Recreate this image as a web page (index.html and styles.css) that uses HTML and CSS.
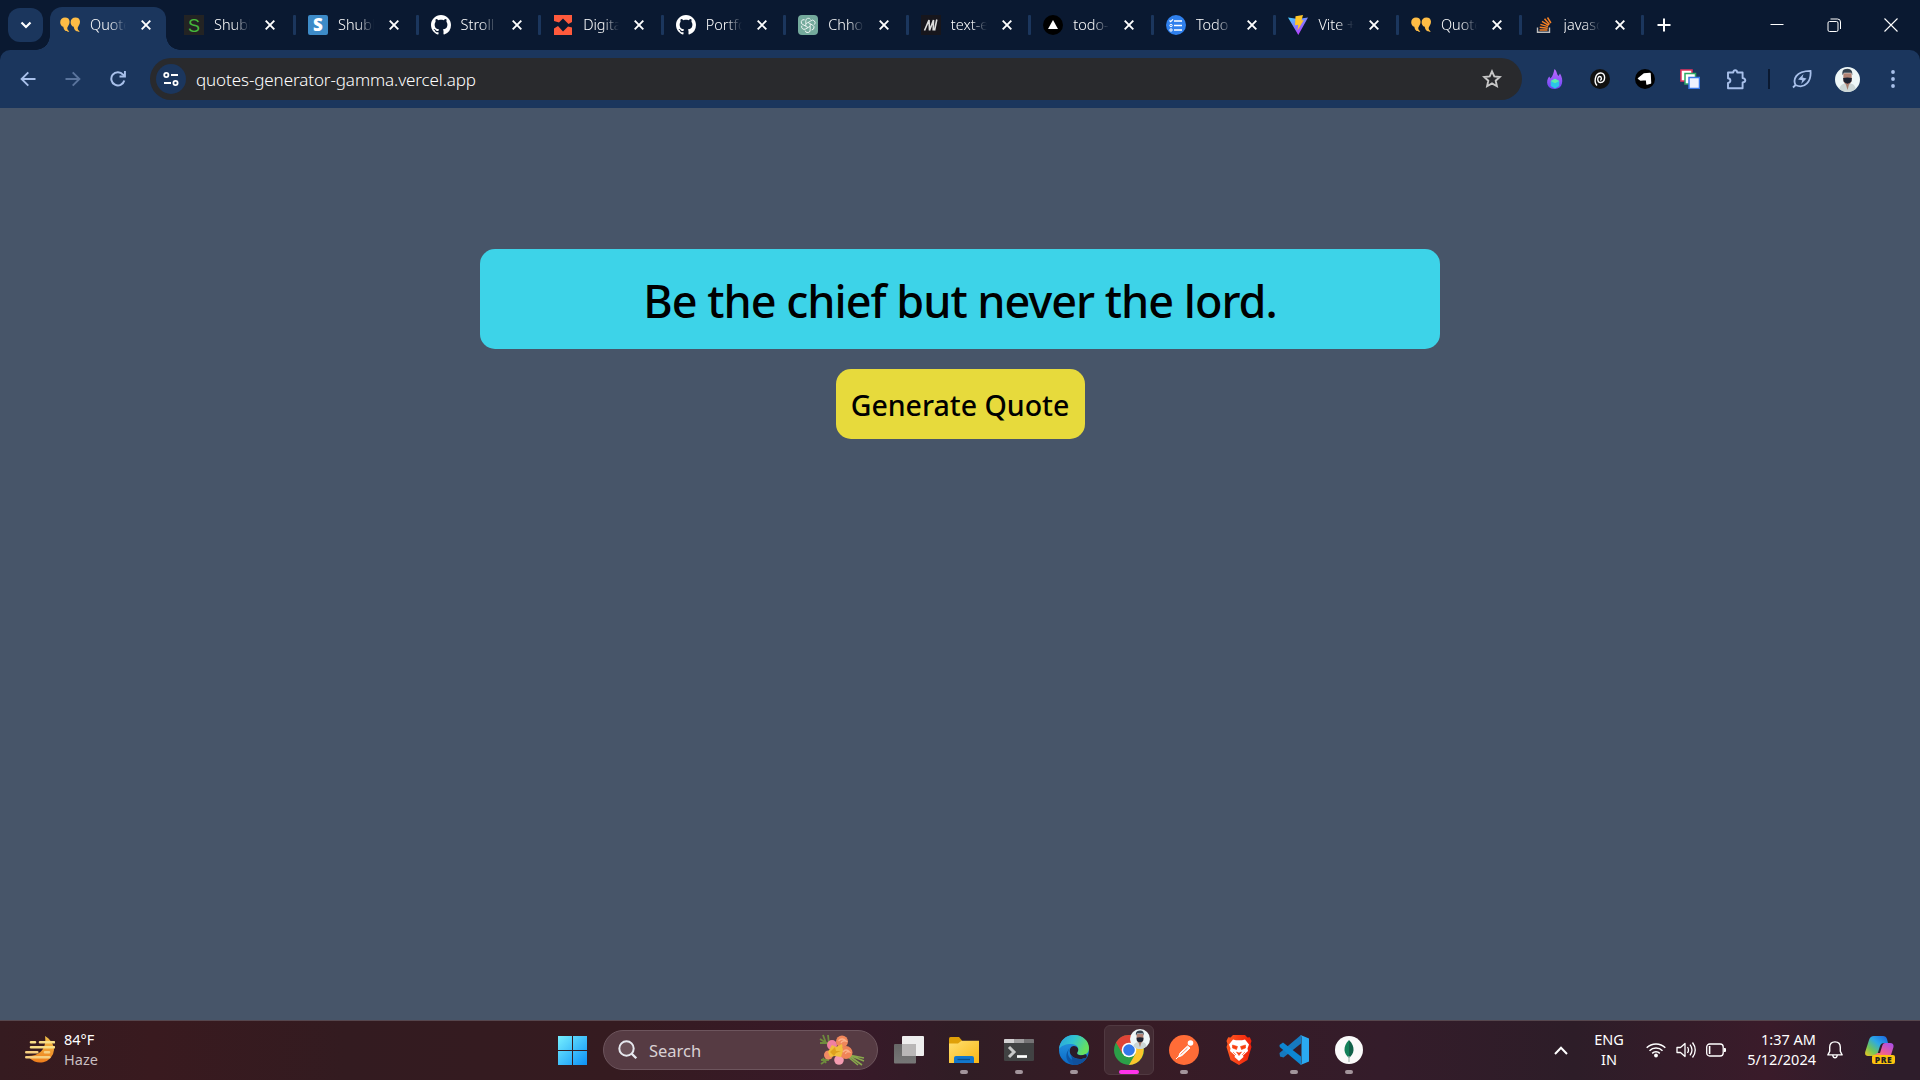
FILE: index.html
```html
<!DOCTYPE html>
<html lang="en">
<head>
<meta charset="utf-8">
<title>Quotes Generator</title>
<link rel="stylesheet" href="styles.css">
</head>
<body>
<svg class="defs" aria-hidden="true">
  <defs>
    <linearGradient id="gWin" x1="0" y1="0" x2="1" y2="1"><stop offset="0" stop-color="#76f0ff"/><stop offset="1" stop-color="#0c90f5"/></linearGradient>
    <linearGradient id="gSun" x1="0" y1="0" x2="0" y2="1"><stop offset="0" stop-color="#f0c04a"/><stop offset="1" stop-color="#ee7d1c"/></linearGradient>
    <linearGradient id="gFolder" x1="0" y1="0" x2="1" y2="1"><stop offset="0" stop-color="#ffdf70"/><stop offset="1" stop-color="#f9b714"/></linearGradient>
    <linearGradient id="gEdge1" x1="0" y1="0" x2="1" y2=".4"><stop offset="0" stop-color="#2b9fe0"/><stop offset=".5" stop-color="#30c4d0"/><stop offset="1" stop-color="#66e060"/></linearGradient>
    <linearGradient id="gEdge2" x1="0" y1="0" x2="0" y2="1"><stop offset="0" stop-color="#2a9de6"/><stop offset="1" stop-color="#0a68c4"/></linearGradient>
    <linearGradient id="gVite" x1="0" y1="0" x2=".6" y2="1"><stop offset="0" stop-color="#41d1ff"/><stop offset="1" stop-color="#bd34fe"/></linearGradient>
    <linearGradient id="gFlame" x1="0" y1="0" x2="0" y2="1"><stop offset="0" stop-color="#c06bff"/><stop offset="1" stop-color="#6a45f5"/></linearGradient>
    <linearGradient id="gCop1" x1="1" y1="0" x2="0" y2="1"><stop offset="0" stop-color="#1b62e0"/><stop offset=".4" stop-color="#2ba8e8"/><stop offset=".7" stop-color="#6fc45a"/><stop offset="1" stop-color="#f2c81e"/></linearGradient>
    <linearGradient id="gCop2" x1="1" y1="0" x2="0" y2="1"><stop offset="0" stop-color="#a24df0"/><stop offset=".6" stop-color="#ea5c9c"/><stop offset="1" stop-color="#ff8a4a"/></linearGradient>
    <linearGradient id="gBrave" x1="0" y1="0" x2="1" y2="0"><stop offset="0" stop-color="#ff5a22"/><stop offset="1" stop-color="#f0200a"/></linearGradient>
    <linearGradient id="gTv" x1="0" y1="0" x2="0" y2="1"><stop offset="0" stop-color="#666"/><stop offset="1" stop-color="#777"/></linearGradient>
    <symbol id="quote" viewBox="0 0 20 20"><path fill="#ffbd45" d="M5 2.400a4.600 4.600 0 0 1 4.600 4.400c0 3-2 4.600-2.300 6-.2 1.400.5 2.600 2 3.600-.9.700-5.200.6-6-4.600C1.200 11.200.2 9.200.2 7.200A4.800 4.800 0 0 1 5 2.400zM15.400 2.400A4.600 4.600 0 0 1 20 6.800c0 3-2 4.600-2.300 6-.2 1.400.5 2.600 2 3.600-.9.700-5.200.6-6-4.600-2.100-.6-3.100-2.600-3.100-4.600a4.800 4.800 0 0 1 4.800-4.800z"/></symbol>
    <symbol id="github" viewBox="0 0 16 16"><path fill="#fff" d="M8 0C3.580 0 0 3.580 0 8c0 3.540 2.290 6.530 5.470 7.590.4.070.55-.17.55-.38 0-.19-.01-.82-.01-1.490-2.010.37-2.530-.49-2.690-.94-.09-.23-.48-.94-.82-1.130-.28-.15-.68-.52-.01-.53.63-.01 1.080.58 1.230.82.72 1.210 1.870.87 2.330.66.07-.52.28-.87.51-1.070-1.780-.2-3.640-.89-3.640-3.950 0-.87.31-1.590.82-2.150-.08-.2-.36-1.020.08-2.120 0 0 .67-.21 2.200.82.64-.18 1.320-.27 2-.27s1.360.09 2 .27c1.530-1.040 2.200-.82 2.200-.82.44 1.100.16 1.920.08 2.120.51.56.82 1.270.82 2.150 0 3.070-1.870 3.750-3.650 3.950.29.25.54.73.54 1.480 0 1.070-.01 1.930-.01 2.200 0 .21.15.46.55.38A8.010 8.010 0 0 0 16 8c0-4.420-3.580-8-8-8z"/></symbol>
    <symbol id="x" viewBox="0 0 12 12"><path d="M1.700 1.700l8.600 8.600M10.300 1.700l-8.600 8.600" stroke="#fff" stroke-width="1.900"/></symbol>
    <symbol id="face" viewBox="0 0 24 24"><circle cx="12" cy="12" r="12" fill="#eef7f8"/><path d="M4 21c1-4 4-5 5-5h6c2 0 4 1 5 5a12 12 0 0 1-16 0z" fill="#cbd6d6"/><path d="M10 15h4l-2 7z" fill="#a87e6c"/><path d="M8 6h8v7q-1 4-4 4t-4-4z" fill="#b08172"/><path d="M7.200 8q-1-5.500 3-6 7-1.500 6.500 6l-1-2.500H8.500z" fill="#33414e"/><path d="M7.800 10.500q4-1 8.400 0l-.4 3.500q-3.800 4-7.500 0z" fill="#1b2333"/></symbol>
  </defs>
</svg>

<div class="browser">
  <header class="tabstrip">
    <div class="tab-search"><svg width="12" height="8" viewBox="0 0 12 8"><path d="M1.500 1.500L6 6l4.500-4.500" fill="none" stroke="#fff" stroke-width="2.200"/></svg></div>
    <div class="tab active"><svg class="fav"><use href="#quote"/></svg><span class="title">Quotes</span><svg class="close"><use href="#x"/></svg></div>
    <div class="tabs">
      <div class="tab"><svg class="fav" viewBox="0 0 20 20"><rect width="20" height="20" fill="#232323"/><text x="10" y="16.500" text-anchor="middle" class="fav-s" fill="#45b83c">S</text></svg><span class="title">Shubham</span><svg class="close"><use href="#x"/></svg></div>
      <div class="tab"><svg class="fav" viewBox="0 0 20 20"><rect width="20" height="20" rx="2" fill="#3d8bc8"/><text x="10" y="16" text-anchor="middle" class="fav-s bold" fill="#fff">S</text></svg><span class="title">Shubham</span><svg class="close"><use href="#x"/></svg></div>
      <div class="tab"><svg class="fav"><use href="#github"/></svg><span class="title">Stroll</span><svg class="close"><use href="#x"/></svg></div>
      <div class="tab"><svg class="fav" viewBox="0 0 20 20"><path fill="#ff5a3c" d="M1 0h18v7l-3.500 2L10 3.500 6 7.500 1 6zM1 20h18v-7.500l-4-1-5 5L5 11l-4 2.500z"/></svg><span class="title">Digital</span><svg class="close"><use href="#x"/></svg></div>
      <div class="tab"><svg class="fav"><use href="#github"/></svg><span class="title">Portfolio</span><svg class="close"><use href="#x"/></svg></div>
      <div class="tab"><svg class="fav" viewBox="0 0 20 20"><rect width="20" height="20" rx="4" fill="#74aa9c"/><g fill="none" stroke="#fff" stroke-width=".9" transform="translate(1.200 1.200) scale(.88)"><path id="petal" d="M10 7.200l3.200-1.900a2.900 2.900 0 0 1 3.900 4.300M7.500 8.600V5.200a2.900 2.900 0 0 1 5.300-1.600"/><use href="#petal" transform="rotate(120 10 10)"/><use href="#petal" transform="rotate(240 10 10)"/><path d="M10 7.100l2.500 1.500v2.800L10 12.900l-2.500-1.500V8.600z"/></g></svg><span class="title">Chhota</span><svg class="close"><use href="#x"/></svg></div>
      <div class="tab"><svg class="fav" viewBox="0 0 20 20"><rect width="20" height="20" fill="#17161c"/><path d="M3.500 15.500L8 5l.5 10.500M8.500 15.500L12.500 5l-.3 10.500M15.800 4.500L13.500 15.500" fill="none" stroke="#ddd" stroke-width="1.600"/></svg><span class="title">text-edit</span><svg class="close"><use href="#x"/></svg></div>
      <div class="tab"><svg class="fav" viewBox="0 0 20 20"><circle cx="10" cy="10" r="10" fill="#000"/><path d="M10 5l5 9H5z" fill="#fff"/></svg><span class="title">todo-list</span><svg class="close"><use href="#x"/></svg></div>
      <div class="tab"><svg class="fav" viewBox="0 0 20 20"><circle cx="10" cy="10" r="10" fill="#2f80ed"/><path d="M8 6h8M8 10.500h8M8 15h8" stroke="#fff" stroke-width="1.700"/><path d="M3.500 5.500l1.200 1.200L7 4.400" fill="none" stroke="#fff" stroke-width="1.200"/><circle cx="5" cy="10.500" r="1.200" fill="none" stroke="#fff"/><circle cx="5" cy="15" r="1.200" fill="none" stroke="#fff"/></svg><span class="title">Todo</span><svg class="close"><use href="#x"/></svg></div>
      <div class="tab"><svg class="fav" viewBox="0 0 20 20"><path d="M0 2.500l10 1.500 10-1.500L10.300 20z" fill="url(#gVite)"/><path d="M7.500 1.200L15 0l-1.500 5.500 2.300-.4L9.500 15.500l.8-5.700-3.300.5z" fill="#ffc526"/></svg><span class="title">Vite +</span><svg class="close"><use href="#x"/></svg></div>
      <div class="tab"><svg class="fav"><use href="#quote"/></svg><span class="title">Quotes</span><svg class="close"><use href="#x"/></svg></div>
      <div class="tab"><svg class="fav" viewBox="0 0 20 20"><path d="M3.500 12.500v4.800h12v-4.800" fill="none" stroke="#bcbbbb" stroke-width="1.400"/><path d="M5.500 15h8M5.700 12.300l8 .9M6.400 9.400l7.600 2.200M8 6.300l6.700 4M10.500 3.800l5 5.800M13.500 2.500l3.400 5.500" stroke="#f48024" stroke-width="1.500"/></svg><span class="title">javascript</span><svg class="close"><use href="#x"/></svg></div>
    </div>
    <svg class="newtab" viewBox="0 0 14 14"><path d="M7 .5v13M.5 7h13" stroke="#fff" stroke-width="2"/></svg>
    <div class="controls">
      <svg viewBox="0 0 14 14"><path d="M.5 6.500h13" stroke="#fff"/></svg>
      <svg viewBox="0 0 14 14"><rect x="1" y="3.500" width="10" height="10" rx="1.500" fill="none" stroke="#fff"/><path d="M3.500 1h7q3 0 3 3v7" fill="none" stroke="#fff"/></svg>
      <svg viewBox="0 0 14 14"><path d="M.5.500l13 13M13.500.500l-13 13" stroke="#fff" stroke-width="1.100"/></svg>
    </div>
  </header>

  <div class="toolbar">
    <nav class="nav">
      <svg viewBox="0 0 16 16"><path d="M15.500 8H2M8.300 1.300L1.600 8l6.700 6.700" fill="none" stroke="#a8c0ea" stroke-width="1.900"/></svg>
      <svg viewBox="0 0 16 16" class="dim"><path d="M.5 8H14M7.700 1.300L14.400 8l-6.700 6.700" fill="none" stroke="#a8c0ea" stroke-width="1.900"/></svg>
      <svg viewBox="0 0 16 16"><path d="M14.300 9.500A6.600 6.600 0 1 1 13 3.600L14.500 5" fill="none" stroke="#a8c0ea" stroke-width="2"/><path d="M15.900 0v6.400H9.500V4.600H14V0z" fill="#a8c0ea"/></svg>
    </nav>
    <div class="omnibox">
      <div class="site"><svg width="16" height="14" viewBox="0 0 16 14"><g fill="none" stroke="#fff" stroke-width="1.800"><circle cx="3.300" cy="3" r="2.100"/><path d="M8 3h7M1 11h7"/><circle cx="12.500" cy="11" r="2.100"/></g></svg></div>
      <span class="url">quotes-generator-gamma.vercel.app</span>
      <svg class="star" viewBox="0 0 20 20"><path d="M10 2.300l2.300 5.100 5.500.6-4.100 3.700 1.200 5.500-4.900-2.800-4.900 2.800 1.200-5.500L2.200 8l5.500-.6z" fill="none" stroke="#c7c7c7" stroke-width="1.900"/></svg>
    </div>
    <div class="extensions">
      <svg viewBox="0 0 20 20"><path d="M9.500 0c3 3 2 5 4 7l1.500-2.500c4 6 3 15.500-5.200 15.500C1.500 20 .5 12 4.200 7.500L5.500 9.500C8 7 8.500 4 9.500 0z" fill="url(#gFlame)"/><path d="M10 9.700l4.300 2.300v5L10 19.500 5.700 17v-5z" fill="#2cc5e8"/><path d="M10 9.700l4.300 2.300L10 14.300 5.700 12z" fill="#5cf0a8"/></svg>
      <svg viewBox="0 0 20 20"><circle cx="10" cy="10" r="10" fill="#111"/><path d="M7 16.500c-3-3-2.500-12 3.500-12.500 5.500-.4 5.500 9 0 9.500-3.500.3-3.500-6-.8-6 2 0 2.300 3.500.5 3.700" fill="none" stroke="#fff" stroke-width="1.400"/></svg>
      <svg viewBox="0 0 20 20"><circle cx="10" cy="10" r="10" fill="#000"/><path d="M3.500 9.500L9 5l6-.5.500 9.500-3.500 1-.5-4.500-6 .5z" fill="#fff" stroke="#fff" stroke-width="1.500" stroke-linejoin="round"/></svg>
      <svg viewBox="0 0 20 20"><path d="M1 1h11v11H1z" fill="#fff" stroke="#e8325c" stroke-width="1.500"/><path d="M5 4.500h10.500V15H5z" fill="#fff" stroke="#2fa866" stroke-width="1.500"/><path d="M9 8.500h10.500v11H9z" fill="#eef2ff" stroke="#3878e8" stroke-width="1.500"/></svg>
      <svg class="puzzle" viewBox="0 0 21 21"><path d="M2 3.500h5.200c.2-1.500.9-2.300 2-2.300s1.900.8 2 2.300h5.400v5.600c1.800.2 2.700.9 2.700 2.200s-.9 2-2.700 2.200v5.700H2v-5.300c1.600-.2 2.400-1 2.400-2.300S3.600 9.500 2 9.300z" fill="none" stroke="#a8c0ea" stroke-width="1.900" stroke-linejoin="round"/></svg>
      <i class="divider"></i>
      <svg viewBox="0 0 20 20"><path d="M3.500 16C1 11 3 2 18.500 1.800 19.500 12 13 20.500 3.500 16zM1 18.500L4 15.500" fill="none" stroke="#a8c0ea" stroke-width="1.800"/><path d="M11.500 5L6 10.500l4.200.8-1 3.700 5.300-5.500-4-.9z" fill="#a8c0ea"/></svg>
      <svg class="avatar"><use href="#face"/></svg>
      <svg class="dots" viewBox="0 0 4 18"><circle cx="2" cy="2" r="1.900"/><circle cx="2" cy="9" r="1.900"/><circle cx="2" cy="16" r="1.900"/></svg>
    </div>
  </div>

  <main class="page">
    <h1 class="quote">Be the chief but never the lord.</h1>
    <button class="generate">Generate Quote</button>
  </main>
</div>

<footer class="taskbar">
  <div class="weather">
    <svg width="30" height="28" viewBox="0 0 30 28"><path d="M20 0C25 3 29 8 29 14A14 13.500 0 0 1 3 20C15 20 22 12 20 0z" fill="url(#gSun)"/><path d="M6 6.300h4M15 6.300h14M6 11.300h23" stroke="#f8de86" stroke-width="2.600" stroke-linecap="round"/><path d="M1.300 16.300h11M20 16.300h4M1.300 21.300h23" stroke="#f6cf80" stroke-width="2.600" stroke-linecap="round"/></svg>
    <div class="two"><span>84°F</span><span class="muted">Haze</span></div>
  </div>
  <div class="apps">
    <svg class="start" viewBox="0 0 29 29"><path d="M0 0h14v14H0zM15 0h14v14H15zM0 15h14v14H0zM15 15h14v14H15z" fill="url(#gWin)"/></svg>
    <div class="search">
      <svg width="20" height="20" viewBox="0 0 20 20"><circle cx="8.500" cy="8.500" r="7.200" fill="#6a5158" stroke="#e6e8ee" stroke-width="2"/><path d="M13.600 13.600l4.700 4.700" stroke="#e6e8ee" stroke-width="2.300"/></svg>
      <span>Search</span>
      <svg class="bouquet" viewBox="0 0 46 32"><g stroke="#6e8c3d" stroke-width="1.800" fill="none"><path d="M12 12L1 5M4 1l3 8M1 9h9M9 1l1 9M13 22L2 30M4 24l3 5M2 26h8"/></g><path d="M29 21l14 10M28 22l11 9M30 21l15 3M30 21l15 6" stroke="#88a84c" stroke-width="1.600"/><circle cx="13" cy="11" r="5" fill="#f080a0"/><circle cx="20" cy="26" r="4.800" fill="#f59bb0"/><circle cx="23" cy="7.500" r="6" fill="#f0875a"/><circle cx="9.500" cy="21" r="4.500" fill="#f28b64"/><circle cx="27" cy="18.500" r="6.500" fill="#ef8458"/><path d="M9 18l4-7 4 2 6-3 1 7-2 6-6-1-5 1z" fill="#f0bf3c"/><path d="M11 18l5-5 1 4 5 0-5 2-2 3z" fill="#dfa21e"/><path d="M19.500 7q3.500-4 7.500 0-4-1-5 2M24 18q3-4 6.500 0-3.500-1-4 2" fill="none" stroke="#fbb18a" stroke-width="1.300"/></svg>
    </div>
    <div class="app"><svg viewBox="0 0 30 30"><rect x="8" y="1" width="22" height="20" rx="1" fill="#eee"/><rect x="0" y="9" width="22" height="19.500" rx="1" fill="url(#gTv)"/><path d="M8 9h14v12H8z" fill="#b9b7b7"/></svg></div>
    <div class="app run"><svg viewBox="0 0 30 30"><path d="M0 3.500Q0 2 1.500 2H10l3 3.500V9H0z" fill="#dfa008"/><path d="M0 8.500h9l3.500-2.700H30V28H0z" fill="url(#gFolder)"/><path d="M5 28v-5q0-2 2-2h16q2 0 2 2v5z" fill="#1277cc"/><path d="M8.500 24.500h12.500" stroke="#0b4f8a" stroke-width="1.300"/></svg></div>
    <div class="app run"><svg viewBox="0 0 30 30"><rect y="4" width="30" height="22" rx="1.200" fill="#414243"/><path d="M0 8V5q0-1 1-1h9v4z" fill="#d2d0d2"/><path d="M10 4h10v4H10z" fill="#a09ea0"/><path d="M20 4h9q1 0 1 1v3H20z" fill="#757375"/><path d="M5 12l5 5-5 5" fill="none" stroke="#c8c8c8" stroke-width="3"/><path d="M13 21.500h10" stroke="#fff" stroke-width="2.700"/></svg></div>
    <div class="app run"><svg viewBox="0 0 30 30"><circle cx="15" cy="15" r="15" fill="url(#gEdge2)"/><path d="M0 14C1 5 7 0 15 0c9 0 15 6 15 13 0 5-3.500 7-7.500 7-4 0-5-1.500-4-3 2.500-4-1-8-6-8C6 9 2 11 0 14z" fill="url(#gEdge1)"/><path d="M11 13c-5 6 0 13 7 13 4 0 7-1.500 9.500-3C25 27.500 20 30 15.500 30 8 29 4 20 11 13z" fill="#0d56a5"/><path d="M18.500 17c2-3-.5-6-3.500-6-4 0-5.500 5-3 9 3 4.500 11 5 15.500 2.500.7-1.200.2-3-1-3.200C23 21 16.500 20.500 18.500 17z" fill="#2b1b29"/><path d="M12 20c3 4.500 11 5 15.500 2.500-3 5.500-9 8-13 7.300z" fill="#10509c"/></svg></div>
    <div class="app run current"><svg viewBox="0 0 30 30"><circle cx="15" cy="15" r="15" fill="#2b9f48"/><path d="M15 15L2 7.500A15 15 0 0 1 28 7.500L15 8z" fill="#e04437"/><path d="M2 7.500l6.500 11.200L15 15V7.500z" fill="#e04437"/><path d="M15 8h13A15 15 0 0 1 15 30l6.500-11.200z" fill="#fcc62c"/><circle cx="15" cy="15" r="7.300" fill="#fff"/><circle cx="15" cy="15" r="5.800" fill="#3279ea"/></svg><svg class="badge"><use href="#face"/></svg></div>
    <div class="app run"><svg viewBox="0 0 30 30"><circle cx="15" cy="15" r="15" fill="#ff6c37"/><circle cx="21.500" cy="8" r="2.800" fill="#fff"/><path d="M18.500 11l2.500 2-8 7.500-3.500 1.500 1.500-4zM11 20l-4 4" fill="#fff" stroke="#fff"/><path d="M11.500 19.500l7-6.500" stroke="#ff6c37" stroke-width=".8"/></svg></div>
    <div class="app"><svg viewBox="0 0 30 30"><path d="M9 0h12l2.500 2.600 2.300-.3L27.500 6l-1 3 1 3-4 13L15 30 6.500 25l-4-13 1-3-1-3 1.700-3.700 2.300.3z" fill="url(#gBrave)"/><path d="M9 4.500l3 .7h6l3-.7 4 5-1.500 4 .5 2.500-5 4.500.5 1.500L15 26l-4.500-4 .5-1.500L6 16l.5-2.500-1.500-4z" fill="#fff"/><path d="M8.500 10l5 1.500-1 3-4-1.500zM21.500 10l-5 1.500 1 3 4-1.500zM12.500 17l2.500 1 2.500-1-2.500 3.500zM9 17l3 3M21 17l-3 3" fill="#f8400f" stroke="#f8400f" stroke-width=".6"/></svg></div>
    <div class="app run"><svg viewBox="0 0 30 30"><path d="M22 0v8.500L4.500 22.500 1 21.500.5 18z" fill="#1679bf"/><path d="M.5 10L4 7.500 22 21.500V30L.7 12z" fill="#0d86d2"/><path d="M21.500 0L30 3.500v23L21.500 30q1-1 1-2.500v-25q0-1.500-1-2.500z" fill="#2aa9f1"/></svg></div>
    <div class="app run"><svg viewBox="0 0 30 30"><circle cx="15" cy="15" r="14" fill="#fafafa"/><path d="M15 5c7 7 5 14 0 18z" fill="#116149"/><path d="M15 5c-7 7-5 14 0 18z" fill="#13805a"/><path d="M15 21v6" stroke="#a9bdb4" stroke-width="1.200"/></svg></div>
  </div>
  <div class="tray">
    <svg class="chev" viewBox="0 0 14 9"><path d="M1 8l6-6.200L13 8" fill="none" stroke="#fff" stroke-width="2"/></svg>
    <div class="two lang"><span>ENG</span><span>IN</span></div>
    <div class="status">
      <svg viewBox="0 0 20 20"><g fill="none" stroke="#fff" stroke-width="1.500"><path d="M.7 7.800a13.200 13.200 0 0 1 18.600 0M3.500 10.700a9.200 9.200 0 0 1 13 0M6.200 13.400a5.400 5.400 0 0 1 7.600 0"/></g><circle cx="10" cy="15.500" r="1.900" fill="#fff"/></svg>
      <svg viewBox="0 0 20 20"><path d="M1 7.500h3.500L9 3.500v13l-4.500-4H1z" fill="none" stroke="#fff" stroke-width="1.300" stroke-linejoin="round"/><path d="M11.500 7q2 3 0 6M14 4.700q4 5.300 0 10.600M16.500 2.500q5.500 7.500 0 15" fill="none" stroke="#fff" stroke-width="1.300"/></svg>
      <svg viewBox="0 0 20 20"><rect x=".7" y="4" width="16.500" height="12" rx="3" fill="none" stroke="#fff" stroke-width="1.300"/><path d="M18 8h1q1 0 1 1v2q0 1-1 1h-1z" fill="#fff"/><rect x="2.800" y="6" width="1.600" height="8" fill="#fff"/></svg>
    </div>
    <div class="two clock"><span>1:37 AM</span><span>5/12/2024</span></div>
    <svg class="bell" viewBox="0 0 16 18"><path d="M8 .9c3.300 0 5.300 2.300 5.300 5.400v4l1.800 3.600H.9l1.800-3.600v-4C2.700 3.200 4.700.9 8 .9zM5.800 14.500q.4 2.300 2.200 2.300t2.200-2.300" fill="none" stroke="#fff" stroke-width="1.400" stroke-linejoin="round"/></svg>
    <svg class="copilot" viewBox="0 0 30 30"><path d="M9 1h9q3 0 4 3l1 4h-4q-3 0-4 3l-2.500 8q-.8 2-3 2H3q-3.500 0-2.800-4L4 5q1.200-4 5-4z" fill="url(#gCop1)"/><path d="M20 8h5q4 0 3.500 4L26 20H7q4 0 5-2h3l2.500-8q.7-2 2.500-2z" fill="url(#gCop2)"/><rect x="7" y="20" width="23" height="9" rx="2" fill="#fcc30e"/><text x="18.500" y="27.500" text-anchor="middle" class="pre">PRE</text></svg>
  </div>
</footer>
</body>
</html>
```
FILE: styles.css
```css
* { box-sizing: border-box; }
body {
  margin: 0;
  width: 1920px;
  height: 1080px;
  overflow: hidden;
  display: flex;
  flex-direction: column;
  background: #475569;
  color: #fff;
  font-family: "Noto Sans", "Open Sans", sans-serif;
}
svg { display: block; flex: none; }
.defs { position: absolute; width: 0; height: 0; }

.browser { flex: 1; display: flex; flex-direction: column; background: #0a1931; }

/* Tab strip */
.tabstrip { height: 50px; display: flex; align-items: center; padding-left: 8px; }
.tab-search {
  width: 35px; height: 34px; margin-right: 7px;
  border-radius: 12px; background: #1b365d;
  display: flex; align-items: center; justify-content: center;
}
.tabs { display: flex; margin-left: 6px; }
.tab {
  width: 122.550px; height: 50px; padding-left: 13.500px;
  display: flex; align-items: center; position: relative;
}
.tabs .tab:first-child { padding-left: 12px; }
.tabs .tab::after {
  content: ""; position: absolute; right: -1.500px; top: 15px;
  width: 3px; height: 20px; border-radius: 1px; background: #1b365d;
}
.tab.active {
  width: 116px; height: 43px; margin-top: 7px; padding: 0 0 7px 10px;
  background: #1b365d; border-radius: 12px 12px 0 0;
}
.tab.active::before, .tab.active::after {
  content: ""; position: absolute; bottom: 0; width: 14px; height: 14px;
}
.tab.active::before { left: -14px; background: radial-gradient(circle at 0 0, transparent 13.500px, #1b365d 14px); }
.tab.active::after { right: -14px; background: radial-gradient(circle at 100% 0, transparent 13.500px, #1b365d 14px); }
.fav { width: 20px; height: 20px; }
.fav-s { font: 400 18px "Liberation Sans", sans-serif; }
.fav-s.bold { font: 800 17px "Open Sans", sans-serif; }
.title {
  width: 36px; margin: -2px 14px 0 10px; overflow: hidden; white-space: nowrap;
  font-size: 14.500px; line-height: 20px; font-weight: 300;
  -webkit-mask-image: linear-gradient(90deg, #000 55%, transparent 100%);
  mask-image: linear-gradient(90deg, #000 55%, transparent 100%);
}
.close { width: 12px; height: 12px; }
.newtab { width: 14px; height: 14px; margin-left: 14px; }
.controls { display: flex; gap: 43px; margin-left: auto; padding-right: 22px; }
.controls svg { width: 14px; height: 14px; }

/* Toolbar */
.toolbar {
  height: 58px; display: flex; align-items: center;
  background: #1b365d; border-radius: 10px 10px 0 0;
}
.nav { display: flex; gap: 29px; padding-left: 20px; width: 150px; }
.nav svg { width: 16px; height: 16px; }
.dim { opacity: .45; }
.omnibox {
  width: 1372px; height: 42px; border-radius: 21px; background: #292a2d;
  display: flex; align-items: center; padding: 0 20px 0 6px;
}
.site {
  width: 30px; height: 30px; border-radius: 50%; background: #1b365d;
  display: flex; align-items: center; justify-content: center;
}
.url { margin-left: 10px; font-size: 17px; font-weight: 300; letter-spacing: -.1px; }
.star { width: 20px; height: 20px; margin-left: auto; }
.extensions { display: flex; align-items: center; flex: 1; padding-left: 23px; }
.extensions svg { width: 20px; height: 20px; margin-right: 25px; }
.extensions .puzzle { width: 21px; height: 21px; margin: 0 21px 0 1px; }
.divider { width: 2px; height: 20px; margin-right: 22px; background: #0a1931; }
.extensions .avatar { width: 25px; height: 25px; margin: 0 31px 0 -2px; }
.extensions .dots { width: 4px; height: 18px; margin: 0; fill: #a8c0ea; }

/* Page */
.page {
  flex: 1; background: #475569; padding-top: 141px;
  display: flex; flex-direction: column; align-items: center; gap: 20px;
}
.quote {
  width: 960px; height: 100px; margin: 0; border-radius: 15px;
  background: #3dd3e8; color: #000;
  font-size: 45px; font-weight: 500; line-height: 103px; text-align: center;
  letter-spacing: -1px;
}
.generate {
  width: 249px; height: 70px; padding: 2px 0 0; border: 0; border-radius: 15px;
  background: #e7da3c; color: #000; white-space: nowrap;
  font: 500 28.500px "Noto Sans", sans-serif;
}

/* Taskbar */
.taskbar {
  height: 60px; display: flex; align-items: center; justify-content: space-between;
  padding-bottom: 1px;
  border-top: 1px solid #56474e;
  background: linear-gradient(90deg, #351b20, #391a1f 8%, #331b20 18%, #351b20 32%, #381929 44%, #301d25 50%, #371b25 59%, #341c2a 72%, #2d1d28 82%, #3a1b2a 92%, #2e1d2b 98%);
}
.weather { width: 558px; display: flex; align-items: center; gap: 9px; padding-left: 25px; }
.two { display: flex; flex-direction: column; font-size: 14.500px; line-height: 20px; margin-top: -2px; }
.muted { color: #c9bfc1; }
.apps { flex: 1; display: flex; align-items: center; }
.start { width: 29px; height: 29px; margin-right: 16px; }
.search {
  width: 275px; height: 40px; margin-right: 6px; padding: 0 12px 0 14px;
  display: flex; align-items: center; gap: 11px;
  border: 1px solid #6d555d; border-radius: 20px; background: #563b43;
  color: #d9d1d4; font-size: 16.500px;
}
.bouquet { width: 46px; height: 32px; margin-left: auto; }
.app {
  width: 50px; height: 50px; margin-right: 5px; border-radius: 6px; position: relative;
  display: flex; align-items: center; justify-content: center;
}
.app > svg { width: 30px; height: 30px; }
.app.run::after {
  content: ""; position: absolute; left: 21px; bottom: 1px;
  width: 8px; height: 4px; border-radius: 2px; background: #a3959c;
}
.app.current { background: #432b33; border: 1px solid #503941; }
.app.current::after { left: 14px; bottom: 0; width: 20px; background: #ff33ea; }
.app > .badge { position: absolute; width: 20px; height: 20px; top: 3px; right: 3px; }
.tray { width: 386px; display: flex; align-items: center; padding-left: 20px; }
.chev { width: 14px; height: 9px; }
.lang { width: 40px; margin-left: 21px; align-items: center; }
.status { display: flex; gap: 10px; margin-left: 17px; }
.status svg { width: 20px; height: 20px; }
.clock { width: 80px; margin-left: 10px; align-items: flex-end; white-space: nowrap; }
.bell { width: 16px; height: 18px; margin-left: 11px; }
.copilot { width: 30px; height: 30px; margin-left: 22px; }
.pre { font: 800 8.500px "Open Sans", sans-serif; letter-spacing: .5px; fill: #222; }
```
